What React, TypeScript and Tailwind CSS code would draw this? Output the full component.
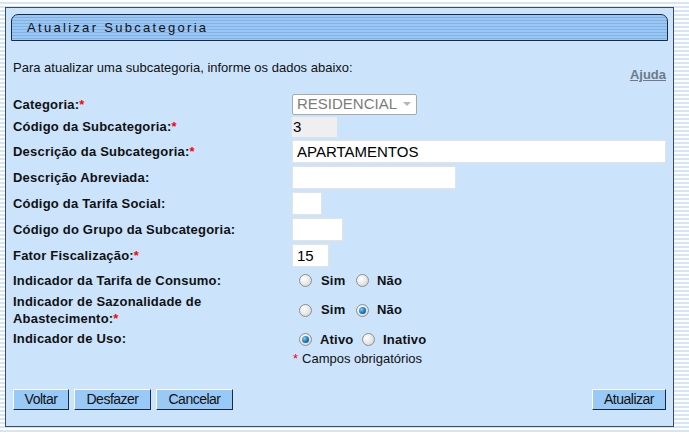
import React from "react";

const F = { fontFamily: '"Liberation Sans", Arial, sans-serif' };

function Radio({ checked }: { checked?: boolean }) {
  return (
    <span className="inline-flex h-[13px] w-[13px] shrink-0 items-center justify-center rounded-full border border-[#8e8f8f] bg-[radial-gradient(circle_at_35%_35%,#ffffff_0%,#e6e6e6_55%,#c8c8c8_100%)]">
      {checked && (
        <span className="h-[7px] w-[7px] rounded-full bg-[radial-gradient(circle_at_35%_35%,#7fd0ff_0%,#1a7fc0_50%,#0b3f70_100%)]" />
      )}
    </span>
  );
}

function Label({ children, req }: { children: React.ReactNode; req?: boolean }) {
  return (
    <div className="w-[279px] shrink-0 text-[13px] font-bold leading-[17px] tracking-[0.2px] text-[#111]">
      {children}
      {req && <span className="text-[#ff0000]">*</span>}
    </div>
  );
}

function Input({ w, value }: { w: string; value?: string }) {
  return (
    <div className={`${w} h-[23px] border border-[#e3e3e3] bg-white pl-[4px] text-[15px] leading-[21px] text-black`}>
      {value}
    </div>
  );
}

function RadioPair({ a, b, checked }: { a: string; b: string; checked: number }) {
  return (
    <div className="flex items-center pl-[7px] text-[13px] font-bold tracking-[0.2px] text-[#111]">
      <Radio checked={checked === 0} />
      <span className="ml-[9px] w-[35px]">{a}</span>
      <Radio checked={checked === 1} />
      <span className="ml-[8px]">{b}</span>
    </div>
  );
}

function Btn({ children, w }: { children: React.ReactNode; w: string }) {
  return (
    <button
      className={`${w} h-[21px] border border-t-white border-l-white border-b-[#1c2a40] border-r-[#1c2a40] bg-[#99c9f6] text-[14px] leading-[19px] tracking-[-0.5px] text-[#111]`}
    >
      {children}
    </button>
  );
}

export default function App() {
  return (
    <div
      style={F}
      className="h-[434px] w-[689px] overflow-hidden bg-[repeating-linear-gradient(to_bottom,#ffffff_0px,#ffffff_2px,#d5e5f6_2px,#d5e5f6_4px)] pl-[5px] pt-[7px]"
    >
      <div className="flex h-[420px] w-[669px] flex-col border border-[#3a4a5f] bg-[#cbe4fc] px-[5px] pt-[6px]">
        <div className="h-[27px] w-[657px] rounded-tl-[7px] rounded-tr-[7px] border border-[#1b2b44] bg-[repeating-linear-gradient(to_bottom,#9cc7f3_0px,#9cc7f3_2px,#80b2ea_2px,#80b2ea_3px)] pl-[15px] text-[13px] leading-[25px] tracking-[2.3px] text-[#111]">
          Atualizar Subcategoria
        </div>
        <div className="pl-[2px] pr-[2px]">
          <div className="mt-[19px] flex items-start justify-between">
            <span className="text-[13px] leading-[16px] text-[#111]">
              Para atualizar uma subcategoria, informe os dados abaixo:
            </span>
            <span className="mt-[7px] text-[13px] font-bold leading-[16px] text-[#6d7a88] underline">Ajuda</span>
          </div>
          <div className="mt-[10px] flex h-[22px] items-center">
            <Label req>Categoria:</Label>
            <div className="flex h-[21px] w-[125px] items-center justify-between rounded-[2px] border border-[#a9a9a9] bg-white pl-[4px] pr-[5px] text-[15px] text-[#7b7b7b]">
              <span>RESIDENCIAL</span>
              <svg width="8" height="5" viewBox="0 0 8 5">
                <path d="M0 0 L8 0 L4 4 Z" fill="#b5b5b5" />
              </svg>
            </div>
          </div>
          <div className="flex h-[23px] items-center">
            <Label req>Código da Subcategoria:</Label>
            <div className="h-[20px] w-[45px] bg-[#efefef] pl-[1px] text-[15px] leading-[20px] text-black">3</div>
          </div>
          <div className="flex h-[26px] items-center">
            <Label req>Descrição da Subcategoria:</Label>
            <Input w="w-[374px]" value="APARTAMENTOS" />
          </div>
          <div className="flex h-[26px] items-center">
            <Label>Descrição Abreviada:</Label>
            <Input w="w-[164px]" />
          </div>
          <div className="flex h-[26px] items-center">
            <Label>Código da Tarifa Social:</Label>
            <Input w="w-[30px]" />
          </div>
          <div className="flex h-[26px] items-center">
            <Label>Código do Grupo da Subcategoria:</Label>
            <Input w="w-[51px]" />
          </div>
          <div className="flex h-[26px] items-center">
            <Label req>Fator Fiscalização:</Label>
            <Input w="w-[37px]" value="15" />
          </div>
          <div className="flex h-[25px] items-center">
            <Label>Indicador da Tarifa de Consumo:</Label>
            <RadioPair a="Sim" b="Não" checked={-1} />
          </div>
          <div className="flex h-[34px] items-center">
            <Label req>
              Indicador de Sazonalidade de
              <br />
              Abastecimento:
            </Label>
            <RadioPair a="Sim" b="Não" checked={1} />
          </div>
          <div className="flex h-[22px] items-center">
            <Label>Indicador de Uso:</Label>
            <div className="mt-[3px] flex items-center pl-[7px] text-[13px] font-bold tracking-[0.2px] text-[#111]">
              <Radio checked />
              <span className="ml-[8px] w-[42px]">Ativo</span>
              <Radio />
              <span className="ml-[8px]">Inativo</span>
            </div>
          </div>
          <div className="flex h-[19px] items-center pl-[280px] text-[13px] text-[#111]">
            <span className="text-[#ff0000]">*</span>
            <span className="ml-[4px]">Campos obrigatórios</span>
          </div>
          <div className="mt-[21px] flex items-center justify-between">
            <div className="flex gap-[5px]">
              <Btn w="w-[56px]">Voltar</Btn>
              <Btn w="w-[77px]">Desfazer</Btn>
              <Btn w="w-[77px]">Cancelar</Btn>
            </div>
            <Btn w="w-[74px]">Atualizar</Btn>
          </div>
        </div>
      </div>
    </div>
  );
}
